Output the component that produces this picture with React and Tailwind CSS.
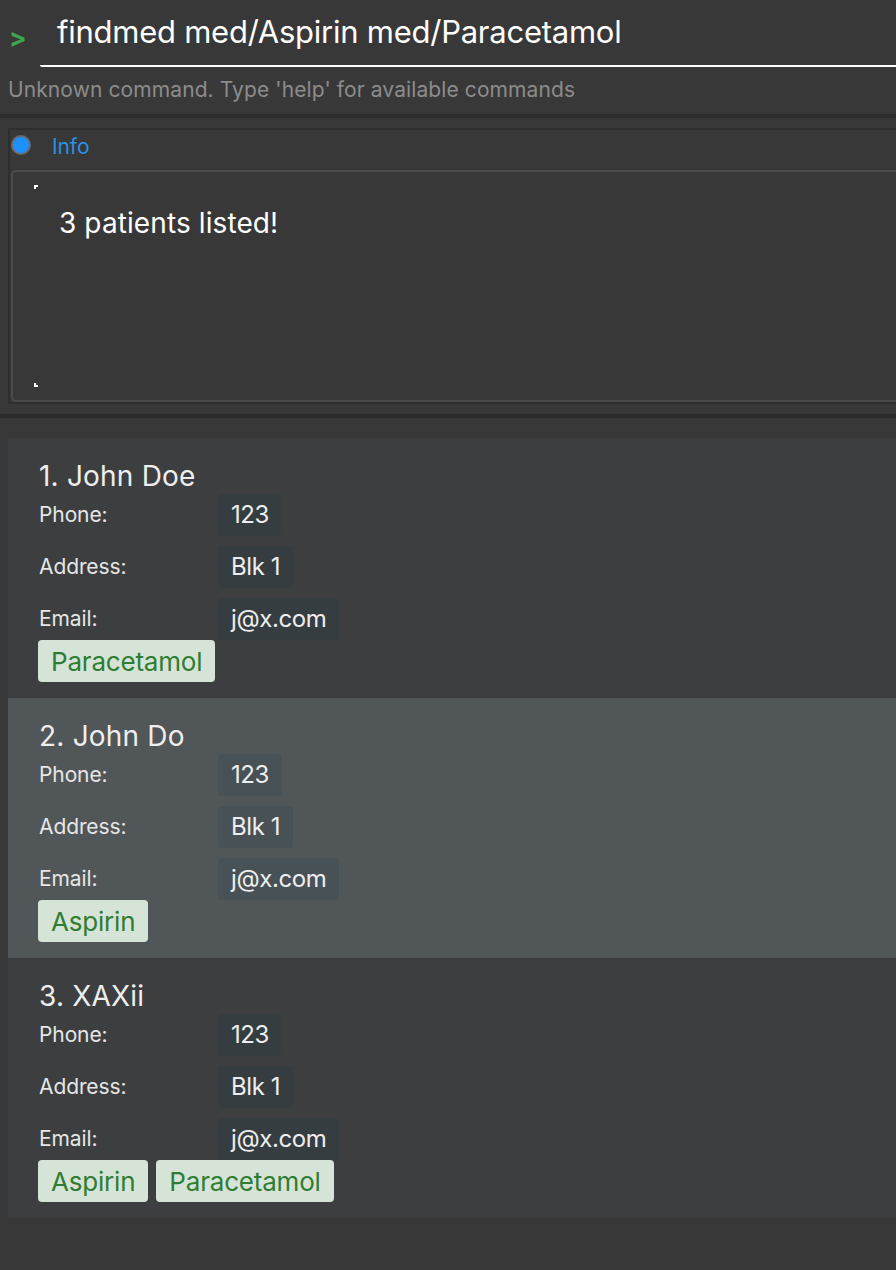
import React from 'react';

const patients = [
  { id: 1, name: 'John Doe', phone: '123', address: 'Blk 1', email: 'j@x.com', meds: ['Paracetamol'] },
  { id: 2, name: 'John Do', phone: '123', address: 'Blk 1', email: 'j@x.com', meds: ['Aspirin'], selected: true },
  { id: 3, name: 'XAXii', phone: '123', address: 'Blk 1', email: 'j@x.com', meds: ['Aspirin', 'Paracetamol'] },
];

const Field = ({ label, value, selected }) => (
  <div className="flex items-center h-[42px]">
    <span className="w-[179px] text-[21px] text-[#e6e6e6] tracking-[-0.1px]">{label}</span>
    <span
      className={`h-[42px] flex items-center px-[13px] rounded-[4px] text-[24px] text-[#eeeeee] tracking-[-0.4px] ${
        selected ? 'bg-[#485156]' : 'bg-[#363d40]'
      }`}
    >
      {value}
    </span>
  </div>
);

const PatientCard = ({ index, patient }) => (
  <div className={`h-[260px] pl-[31px] pt-[20px] ${patient.selected ? 'bg-[#515658]' : 'bg-[#3c3e40]'}`}>
    <div className="h-[36px] flex items-center text-[28px] text-[#eeeeee] tracking-[0.2px]">
      {index}. {patient.name}
    </div>
    <div className="flex flex-col gap-[10px]">
      <Field label="Phone:" value={patient.phone} selected={patient.selected} />
      <Field label="Address:" value={patient.address} selected={patient.selected} />
      <Field label="Email:" value={patient.email} selected={patient.selected} />
    </div>
    <div className="flex gap-[8px] -ml-px">
      {patient.meds.map((m) => (
        <span
          key={m}
          className="h-[42px] flex items-center px-[13px] rounded-[4px] bg-[#d6e4d8] text-[#2e7d32] text-[26px] tracking-[-0.2px]"
        >
          {m}
        </span>
      ))}
    </div>
  </div>
);

export default function App() {
  return (
    <div
      className="w-[896px] h-[1270px] overflow-hidden bg-[#383838]"
      style={{ fontFamily: 'Inter, "Noto Sans", sans-serif' }}
    >
      {/* command box */}
      <div className="h-[114px]">
        <div className="flex items-end h-[67px]">
          <span className="w-[40px] pl-[9px] pb-[16px] text-[26px] font-bold text-[#3fa34d] leading-none">&gt;</span>
          <div className="flex-1 h-[67px] border-b-2 border-white rounded-bl-[2px] flex items-center pl-[17px]">
            <span className="text-[31px] text-white tracking-[-0.25px]">findmed med/Aspirin med/Paracetamol</span>
          </div>
        </div>
        <div className="pl-[8px] h-[46px] flex items-center text-[21px] text-[#8c8c8c] tracking-[0.1px]">
          Unknown command. Type 'help' for available commands
        </div>
      </div>
      <div className="h-[4px] bg-[#2c2c2c]" />

      {/* result display */}
      <div className="pt-[10px] pl-[8px]">
        <div className="border-t-2 border-l-2 border-b-2 border-[#2e2e2e] h-[276px]">
          <div className="h-[40px] flex items-start pt-[5px]">
            <span className="ml-px w-[20px] h-[20px] rounded-full bg-[#1e90ff] border-2 border-[#6a6a6a]" />
            <span className="ml-[21px] mt-[2px] text-[21px] leading-[20px] text-[#2a8fe6] tracking-[-0.1px]">Info</span>
          </div>
          <div className="relative ml-px h-[232px] border-2 border-r-0 border-[#4b4b4b] rounded-l-[5px]">
            <span className="absolute left-[21px] top-[13px] w-[4px] h-[4px] border-t-2 border-l-2 border-white" />
            <span className="absolute left-[21px] bottom-[13px] w-[4px] h-[4px] border-b-2 border-l-2 border-white" />
            <div className="pl-[46px] pt-[30px] text-[28px] text-white tracking-[0.1px]">3 patients listed!</div>
          </div>
        </div>
      </div>
      <div className="mt-[10px] h-[4px] bg-[#2c2c2c]" />

      {/* patient list */}
      <div className="pt-[20px] pl-[8px]">
        {patients.map((p, i) => (
          <PatientCard key={p.id} index={i + 1} patient={p} />
        ))}
      </div>
    </div>
  );
}
